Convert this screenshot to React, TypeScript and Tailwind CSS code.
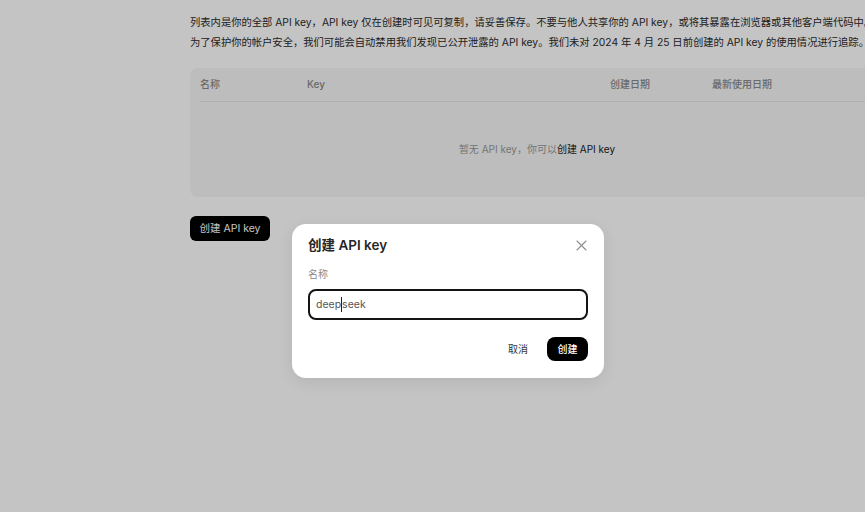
import React from 'react';

const font = { fontFamily: '"Inter", "Noto Sans CJK SC", "Noto Sans", sans-serif' };

const App: React.FC = () => {
  return (
    <div className="relative w-[865px] h-[512px] overflow-hidden bg-white" style={font}>
      {/* Page behind the dialog */}
      <div className="pl-[190px] pt-[12px] w-[1100px]">
        <div className="text-[10.3px] leading-[20px] text-[#2a2a2a] whitespace-nowrap">
          <p>列表内是你的全部 API key，API key 仅在创建时可见可复制，请妥善保存。不要与他人共享你的 API key，或将其暴露在浏览器或其他客户端代码中。</p>
          <p>为了保护你的帐户安全，我们可能会自动禁用我们发现已公开泄露的 API key。我们未对 2024 年 4 月 25 日前创建的 API key 的使用情况进行追踪。</p>
        </div>

        {/* Table */}
        <div className="mt-[16px] w-[694px] h-[129px] rounded-[8px] bg-[#f6f6f6] px-[10px] flex flex-col">
          <div className="h-[34px] border-b border-[#e4e4e4] grid grid-cols-[107px_303px_102px_1fr] items-center text-[10px] font-medium text-[#8a8a8a]">
            <span>名称</span>
            <span>Key</span>
            <span>创建日期</span>
            <span>最新使用日期</span>
          </div>
          <div className="flex-1 flex items-center justify-center text-[10px] text-[#999]">
            暂无 API key，你可以<span className="text-[#1a1a1a]">创建 API key</span>
          </div>
        </div>

        <button className="mt-[19px] h-[25px] w-[80px] rounded-[6px] bg-black text-white text-[10.5px] flex items-center justify-center">
          创建 API key
        </button>
      </div>

      {/* Overlay */}
      <div className="absolute inset-0 bg-black/[0.23]" />

      {/* Dialog */}
      <div className="absolute left-[292px] top-[224px] w-[312px] rounded-[14px] bg-white px-[16px] pt-[13px] pb-[17px] shadow-[0_4px_16px_rgba(0,0,0,0.08)]">
        <div className="flex items-center justify-between">
          <h2 className="text-[13.5px] leading-[16px] font-semibold text-[#262626]">创建 API key</h2>
          <button className="w-[16px] h-[16px] flex items-center justify-center mr-[-1px]">
            <svg width="11" height="11" viewBox="0 0 11 11" fill="none" stroke="#8c8c8c" strokeWidth="1.1" strokeLinecap="round">
              <path d="M1 1L10 10M10 1L1 10" />
            </svg>
          </button>
        </div>
        <div className="mt-[14px] text-[10px] leading-[14px] text-[#8c8c8c]">名称</div>
        <div className="mt-[8px] h-[31px] rounded-[8px] border-2 border-[#141414] flex items-center px-[6px] text-[10.5px] text-[#555]">
          <span>deep</span>
          <span className="inline-block w-[1px] h-[15px] bg-[#222]" />
          <span>seek</span>
        </div>
        <div className="mt-[17px] flex items-center justify-end gap-[11px]">
          <button className="h-[24px] px-[8px] text-[10px] text-[#333]">取消</button>
          <button className="h-[24px] w-[41px] rounded-[8px] bg-black text-white text-[10px] font-medium">创建</button>
        </div>
      </div>
    </div>
  );
};

export default App;
